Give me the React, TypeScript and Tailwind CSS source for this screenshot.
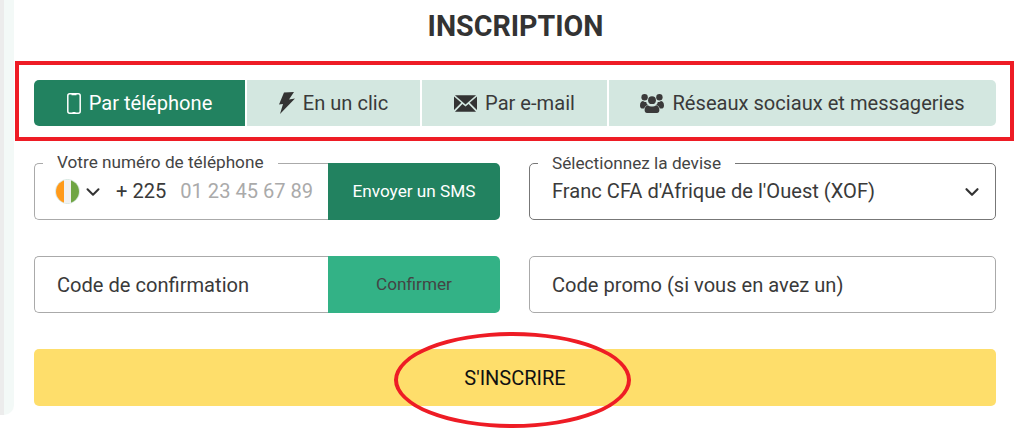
import { ChevronDown } from "lucide-react";
import type { ReactNode } from "react";

function PhoneIcon() {
  return (
    <svg width="14" height="21" viewBox="0 0 14 21" fill="none">
      <rect x="0.8" y="0.8" width="12.4" height="19.4" rx="2" stroke="white" strokeWidth="1.5" />
      <path d="M4.5 1h5v1.2h-5zM5.5 19h3v1.2h-3z" fill="white" />
    </svg>
  );
}

function BoltIcon() {
  return (
    <svg width="16" height="22" viewBox="0 0 16 22">
      <path d="M5 .5 15 0l-5 7.5 6-1L1 22l3-10-4 .5z" fill="#333" />
    </svg>
  );
}

function MailIcon() {
  return (
    <svg width="23" height="17" viewBox="0 0 24 17">
      <path d="M1 0h22L12 9.6z" fill="#333" />
      <path d="M0 1.2v14.2l7.6-7.6zM24 1.2v14.2l-7.6-7.6z" fill="#333" />
      <path d="M8.8 8.9 12 11.7l3.2-2.8L23 17H1z" fill="#333" />
    </svg>
  );
}

function UsersIcon() {
  return (
    <svg width="24" height="20" viewBox="0 0 24 20" fill="#3a3a3a">
      <circle cx="4.6" cy="4.3" r="3.2" />
      <circle cx="19.4" cy="4.3" r="3.2" />
      <circle cx="12" cy="7.2" r="3.9" />
      <path d="M0 12.6c0-3 1.4-4.6 3.2-4.6.8 1 2 1.2 3 1 .2 1.2.8 2.2 1.6 3-1.8.4-3 1.6-3.6 3.4H1.6C.6 15.4 0 14.2 0 12.6z" />
      <path d="M24 12.6c0-3-1.4-4.6-3.2-4.6-.8 1-2 1.2-3 1-.2 1.2-.8 2.2-1.6 3 1.8.4 3 1.6 3.6 3.4h2.6c1 0 1.6-1.2 1.6-2.8z" />
      <path d="M8 12.2c1.1 1 2.5 1.4 4 1.4s2.900-.4 4-1.400c2 .2 3.400 2 3.400 4.800 0 1.800-1 3-2.400 3H7c-1.400 0-2.400-1.200-2.400-3 0-2.800 1.400-4.600 3.400-4.800z" />
    </svg>
  );
}

function Flag() {
  return (
    <div className="flex h-[25px] w-[25px] shrink-0 overflow-hidden rounded-full border border-[#d5e6e0]">
      <div className="flex-1 bg-[#ff9a1a]" />
      <div className="flex-1 bg-[#f1f1f1]" />
      <div className="flex-1 bg-[#6fa544]" />
    </div>
  );
}

function Tab({
  icon,
  label,
  active,
  className,
}: {
  icon: ReactNode;
  label: string;
  active?: boolean;
  className: string;
}) {
  return (
    <div
      className={`flex items-center justify-center gap-[8px] text-[20.1px] ${
        active ? "bg-[#228260] text-white" : "bg-[#d3e7e0] text-[#3a3a3a]"
      } ${className}`}
    >
      {icon}
      <span>{label}</span>
    </div>
  );
}

function Legend({ children, className }: { children: string; className: string }) {
  return (
    <span
      className={`absolute top-[-11px] bg-white px-[14px] text-[17.2px] leading-[20px] text-[#444] ${className}`}
    >
      {children}
    </span>
  );
}

export default function App() {
  return (
    <div className="flex h-[448px] w-[1024px] overflow-hidden bg-white font-['Roboto',sans-serif] text-[#3a3a3a]">
      {/* Bord gauche */}
      <div className="h-[415px] w-[14px] shrink-0 rounded-br-[10px] border-l-[4px] border-[#ececec] bg-[#f3f9f7]" />

      <div className="relative flex-1">
        <h1 className="mb-[17px] ml-[1px] mt-[9px] h-[35px] w-[1001px] text-center text-[28.6px] font-bold leading-[35px] text-[#333]">
          INSCRIPTION
        </h1>

        {/* Cadre rouge */}
        <div className="ml-[1px] h-[80px] w-[999px] border-[4px] border-[#ee1c25] px-[15px] pt-[15px]">
          <div className="flex h-[46px] w-[962px] gap-[2px]">
            <Tab active icon={<PhoneIcon />} label="Par téléphone" className="w-[211px] rounded-l-[5px]" />
            <Tab icon={<BoltIcon />} label="En un clic" className="w-[173px]" />
            <Tab icon={<MailIcon />} label="Par e-mail" className="w-[185px]" />
            <Tab icon={<UsersIcon />} label="Réseaux sociaux et messageries" className="w-[387px] rounded-r-[5px]" />
          </div>
        </div>

        <div className="ml-[20px] mt-[22px] grid w-[962px] grid-cols-[466px_467px] gap-x-[29px] gap-y-[36px]">
          <div className="relative flex h-[57px]">
            <div className="flex flex-1 items-center rounded-l-[5px] border border-r-0 border-[#aaa] pl-[20px]">
              <Flag />
              <ChevronDown size={22} strokeWidth={2.2} className="ml-[2px] shrink-0 text-[#333]" />
              <span className="ml-[12px] text-[20.1px] text-[#3a3a3a]">+ 225</span>
              <span className="ml-[14px] text-[20.1px] text-[#aaa]">01 23 45 67 89</span>
            </div>
            <button className="w-[172px] rounded-r-[5px] bg-[#228260] text-[17.2px] text-white">Envoyer un SMS</button>
            <Legend className="left-[9px]">Votre numéro de téléphone</Legend>
          </div>

          <div className="relative flex h-[57px] items-center justify-between rounded-[5px] border border-[#777] pl-[22px] pr-[12px]">
            <span className="text-[20.1px] text-[#3a3a3a]">Franc CFA d'Afrique de l'Ouest (XOF)</span>
            <ChevronDown size={22} strokeWidth={2.4} className="text-[#333]" />
            <Legend className="left-[8px]">Sélectionnez la devise</Legend>
          </div>

          <div className="flex h-[57px]">
            <div className="flex flex-1 items-center rounded-l-[5px] border border-r-0 border-[#aaa] pl-[22px] pt-[2px] text-[20.1px] text-[#3a3a3a]">
              Code de confirmation
            </div>
            <button className="w-[172px] rounded-r-[5px] bg-[#33b286] text-[17.2px] text-[#444]">Confirmer</button>
          </div>

          <div className="flex h-[57px] items-center rounded-[5px] border border-[#aaa] pl-[22px] pt-[2px] text-[20.1px] text-[#3a3a3a]">
            Code promo (si vous en avez un)
          </div>
        </div>

        <button className="ml-[20px] mt-[36px] flex h-[57px] w-[962px] items-center justify-center rounded-[5px] bg-[#fede6b] text-[20px] text-[#111]">
          S'INSCRIRE
        </button>

        {/* Ellipse rouge */}
        <div className="absolute left-[380px] top-[332px] h-[96px] w-[237px] rounded-[50%] border-[4px] border-[#ee1c25]" />
      </div>
    </div>
  );
}
